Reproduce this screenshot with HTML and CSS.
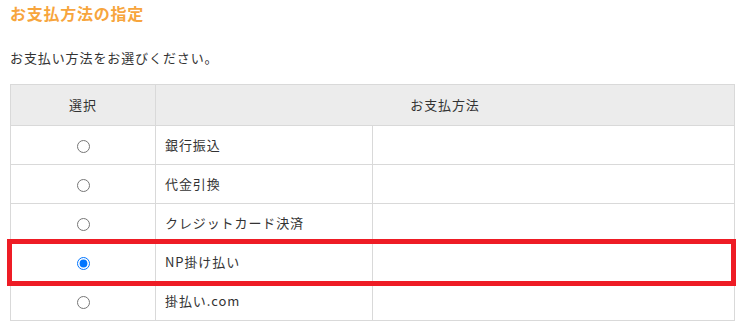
FILE: index.html
```html
<!DOCTYPE html>
<html lang="ja">
  <head>
    <meta charset="UTF-8" />
    <title>お支払方法の指定</title>
    <link rel="stylesheet" href="styles.css">
  </head>
  <body>
    <div class="payment">
      <h2 class="payment-title">お支払方法の指定</h2>
      <p class="payment-lead">お支払い方法をお選びください。</p>

      <div class="payment-table-wrap">
        <table class="payment-table">
          <thead>
            <tr>
              <th class="col-select">選択</th>
              <th colspan="2">お支払方法</th>
            </tr>
          </thead>
          <tbody>
            <tr>
              <td class="col-select"><input type="radio" name="pay" value="1" /></td>
              <td class="col-name">銀行振込</td>
              <td></td>
            </tr>
            <tr>
              <td class="col-select"><input type="radio" name="pay" value="2" /></td>
              <td class="col-name">代金引換</td>
              <td></td>
            </tr>
            <tr>
              <td class="col-select"><input type="radio" name="pay" value="3" /></td>
              <td class="col-name">クレジットカード決済</td>
              <td></td>
            </tr>
            <tr>
              <td class="col-select"><input type="radio" name="pay" value="4" checked /></td>
              <td class="col-name">NP掛け払い</td>
              <td></td>
            </tr>
            <tr>
              <td class="col-select"><input type="radio" name="pay" value="5" /></td>
              <td class="col-name">掛払い.com</td>
              <td></td>
            </tr>
          </tbody>
        </table>
        <!-- 選択中の行を強調 -->
        <div class="highlight"></div>
      </div>
    </div>
  </body>
</html>
```

FILE: styles.css
```css
body {
  margin: 0;
  font-family: "Noto Sans CJK JP", "Noto Sans", sans-serif;
  color: #333;
  background-color: #fff;
}

.payment {
  padding: 0 10px;
}

.payment-title {
  margin: 0;
  padding-top: 1px;
  font-size: 16px;
  line-height: 24px;
  font-weight: bold;
  letter-spacing: 0.75px;
  color: #f7a53d;
}

.payment-lead {
  margin: 23px 0 0;
  font-size: 13px;
  line-height: 20px;
  letter-spacing: 0.9px;
  color: #333;
}

.payment-table-wrap {
  position: relative;
  margin-top: 16px;
}

.payment-table {
  width: 725px;
  border-collapse: collapse;
  font-size: 13px;
  letter-spacing: 0.9px;
  color: #333;
}

.payment-table th,
.payment-table td {
  border: 1px solid #d9d9d9;
  line-height: 20px;
}

.payment-table th {
  height: 40px;
  padding: 0;
  font-weight: normal;
  text-align: center;
  background-color: #ececec;
}

.payment-table td {
  height: 39px;
  padding: 0 9px;
  box-sizing: border-box;
}

.payment-table .col-select {
  width: 144px;
  text-align: center;
}

.payment-table td.col-select {
  padding: 0;
}

.payment-table .col-name {
  width: 217px;
}

.payment-table input[type="radio"] {
  margin: 0;
  vertical-align: middle;
}

.highlight {
  position: absolute;
  top: 155px;
  left: -3px;
  width: 719px;
  height: 37px;
  border: 5px solid #ee1c25;
  pointer-events: none;
}
```
